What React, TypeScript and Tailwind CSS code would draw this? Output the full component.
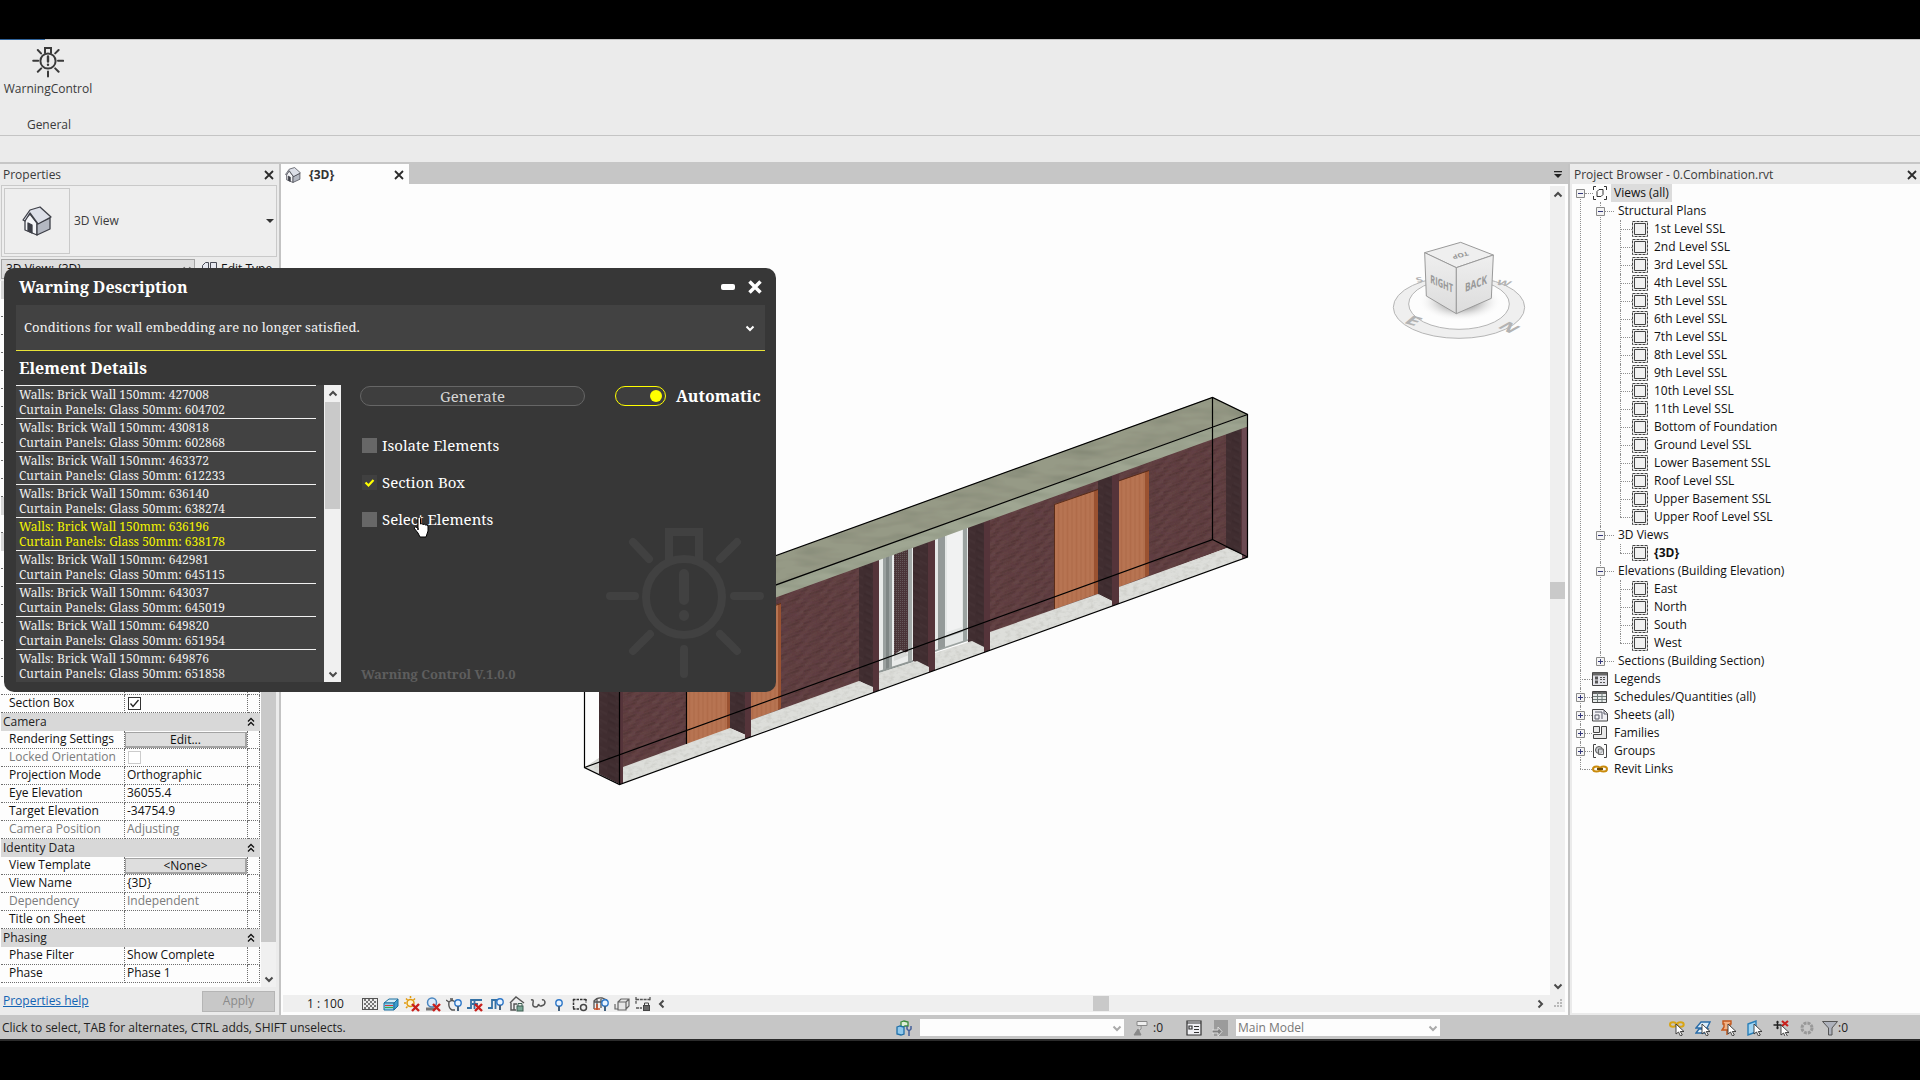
import React, { useState } from "react";

const SANS = "font-['Open_Sans','Noto_Sans',sans-serif]";
const SERIF = "font-['Noto_Serif','DejaVu_Serif_Condensed','DejaVu_Serif',serif]";

/* ---------- shared drawings ---------- */

function BulbIcon({ className, stroke }: { className: string; stroke: number }) {
  return (
    <svg viewBox="602 524 160 158" className={className} fill="none" stroke="currentColor" strokeWidth={stroke} aria-hidden="true">
      <circle cx="682" cy="598" r="38" />
      <path d="M667 562V533h30v29" />
      <path strokeLinecap="round" d="M608 597h25M732 597h26M682 650v25M631 543l16 17M735 543l-17 17M631 652l17-17M735 652l-17-17" />
      <path strokeLinecap="round" strokeWidth={stroke + 2} d="M682 575v26M682 616v1" />
    </svg>
  );
}

function House({ className }: { className: string }) {
  return (
    <svg viewBox="0 0 30 30" className={className} stroke="#3d3f47" strokeWidth="1.3" strokeLinejoin="round" aria-hidden="true">
      <path d="M3 13v11l12 5V17L8 8z" fill="#f4f5f8" />
      <path d="M15 18v11l13-6V12z" fill="#b4b8c2" />
      <path d="M1 14 8 4 18 1 29 11 16 18 8 7 3 15z" fill="#dcdfe8" />
      <path d="M6 17l4 2v8l-4-2z" fill="#3d3f47" />
    </svg>
  );
}

function Cross({ className }: { className: string }) {
  return (
    <svg viewBox="0 0 10 10" className={className} fill="none" stroke="#2b2b2b" strokeWidth="1.8" aria-hidden="true">
      <path d="M1 1l8 8M9 1 1 9" />
    </svg>
  );
}

function Chevron({ dir, color = "#4a4a4a" }: { dir: "up" | "down" | "left" | "right"; color?: string }) {
  const d = { up: "M1.5 6.500 5 3l3.500 3.500", down: "M1.500 3.500 5 7l3.500-3.500", left: "M6.500 1.500 3 5l3.500 3.500", right: "M3.500 1.500 7 5 3.500 8.500" }[dir];
  return (
    <svg viewBox="0 0 10 10" className="size-[10px] shrink-0" fill="none" stroke={color} strokeWidth="2" aria-hidden="true">
      <path d={d} />
    </svg>
  );
}

/* ---------- ribbon ---------- */

function Ribbon() {
  return (
    <header className="bg-[#ebebeb]">
      <div className="flex h-px bg-[#c4c4c4]">
        <span className="w-[45px] bg-[#2f6299]" />
      </div>
      <div className="flex h-[95px] flex-col items-start justify-between pl-[3px]">
        <button type="button" className="flex w-[90px] flex-col items-center gap-[3px] pt-[6px] text-[#3a3a3a]">
          <BulbIcon className="size-8" stroke={10} />
          <span className="text-xs leading-4">WarningControl</span>
        </button>
        <span className="w-[92px] pb-[2px] text-center text-xs leading-4 text-[#3a3a3a]">General</span>
      </div>
      <div className="h-[27px] border-t border-[#c4c4c4]" />
      <div className="h-[2px] bg-[#c6c6c6]" />
    </header>
  );
}

/* ---------- properties panel ---------- */

type Row =
  | { kind: "head"; label: string }
  | { kind: "text"; label: string; value?: string; dim?: boolean }
  | { kind: "button"; label: string; value: string }
  | { kind: "check"; label: string; checked: boolean; dim?: boolean };

const blank = (n: number): Row[] => Array.from({ length: n }, () => ({ kind: "text", label: "" }) as Row);

const ROWS: Row[] = [
  { kind: "head", label: "" },
  ...blank(11),
  { kind: "head", label: "" },
  ...blank(1),
  { kind: "head", label: "" },
  ...blank(8),
  { kind: "check", label: "Section Box", checked: true },
  { kind: "head", label: "Camera" },
  { kind: "button", label: "Rendering Settings", value: "Edit..." },
  { kind: "check", label: "Locked Orientation", checked: false, dim: true },
  { kind: "text", label: "Projection Mode", value: "Orthographic" },
  { kind: "text", label: "Eye Elevation", value: "36055.4" },
  { kind: "text", label: "Target Elevation", value: "-34754.9" },
  { kind: "text", label: "Camera Position", value: "Adjusting", dim: true },
  { kind: "head", label: "Identity Data" },
  { kind: "button", label: "View Template", value: "<None>" },
  { kind: "text", label: "View Name", value: "{3D}" },
  { kind: "text", label: "Dependency", value: "Independent", dim: true },
  { kind: "text", label: "Title on Sheet", value: "" },
  { kind: "head", label: "Phasing" },
  { kind: "text", label: "Phase Filter", value: "Show Complete" },
  { kind: "text", label: "Phase", value: "Phase 1" },
];

function PropertyRow({ row }: { row: Row }) {
  if (row.kind === "head") {
    return (
      <tr className="h-[18px] bg-[#d8d8d8]">
        <th colSpan={3} scope="colgroup" className="p-0 text-left font-normal">
          <span className="flex h-[18px] items-center justify-between pr-1 pl-[2px]">
            {row.label}
            {row.label && (
              <svg viewBox="0 0 8 10" className="mr-[1px] h-[10px] w-2" fill="none" stroke="#111" strokeWidth="1.3" aria-hidden="true">
                <path d="M1 4.500 4 1.500l3 3M1 8.500l3-3 3 3" />
              </svg>
            )}
          </span>
        </th>
      </tr>
    );
  }
  const dim = "dim" in row && row.dim;
  const cell = "h-[18px] border-r border-b border-dotted border-[#6e6e6e] p-0";
  return (
    <tr className={dim ? "text-[#7b7b7b]" : "text-[#111]"}>
      <th scope="row" className={cell + " text-left font-normal"}>
        <span className="block h-[17px] pl-2 leading-4">{row.label}</span>
      </th>
      <td className={cell}>
        {row.kind === "button" && (
          <button type="button" aria-label={row.label} className="block h-4 w-full border border-r-2 border-b-2 border-[#a3a3a3] bg-[#dedede] leading-[13px]">
            {row.value}
          </button>
        )}
        {row.kind === "check" && (
          <div className="flex h-[17px] items-center pl-[3px]">
            <input type="checkbox" aria-label={row.label} defaultChecked={row.checked} disabled={dim} className={"size-[13px] appearance-none border bg-white " + (dim ? "border-[#cccccc]" : "border-[#333]")} />
            {row.checked && (
              <svg viewBox="0 0 13 13" className="pointer-events-none -ml-[13px] size-[13px]" fill="none" stroke="#222" strokeWidth="1.300" aria-hidden="true">
                <path d="M2.500 6.500 5 9.500l5.500-6.500" />
              </svg>
            )}
          </div>
        )}
        {row.kind === "text" && <span className="block h-[17px] pl-[2px] leading-4">{row.value}</span>}
      </td>
      <td className={cell} />
    </tr>
  );
}

function PropertiesPanel() {
  return (
    <aside className="flex w-[281px] shrink-0 flex-col border-r-2 border-[#c3c3c3] bg-[#ebebeb] text-xs text-[#222]">
      <div className="flex h-[21px] items-center justify-between pr-[5px] pl-[3px] text-[#3a3a3a]">
        <h2>Properties</h2>
        <button type="button" aria-label="Close properties"><Cross className="size-[10px]" /></button>
      </div>
      <button type="button" className="mr-[2px] ml-px flex h-[72px] items-center border border-[#c9c9c9] bg-[#eeeeee] px-[2px] text-left text-[#3a3a3a]">
        <span className="flex size-[66px] items-center justify-center border border-[#c9c9c9]">
          <House className="size-[30px]" />
        </span>
        <span className="flex-1 pl-1">3D View</span>
        <svg viewBox="0 0 8 4" className="h-1 w-2" aria-hidden="true"><path d="M0 0h8L4 4z" fill="#333" /></svg>
      </button>
      <div className="flex h-6 items-center">
        <select aria-label="View type" className="ml-px h-5 w-[194px] appearance-none border border-[#a5a5a5] bg-[#dddddd] pl-1 text-[#111]">
          <option>3D View: {"{3D}"}</option>
        </select>
        <span className="-ml-[13px] w-[13px]"><Chevron dir="down" color="#666" /></span>
        <button type="button" className="flex items-center gap-1 pl-[6px] whitespace-nowrap text-[#111]">
          <svg viewBox="0 0 16 16" className="size-4" fill="#e6e8ef" stroke="#4a4d57" aria-hidden="true">
            <path d="M1.500 4.500l3-3h3v8h-6zM9.500 1.500h6v8h-6zM6.500 9.500h6v5h-6z" />
          </svg>
          Edit Type
        </button>
      </div>
      <div className="flex flex-1 bg-[#fdfdfd] pl-px">
        <div className="w-[259px]">
          <table className="w-full table-fixed border-separate border-spacing-0">
            <colgroup>
              <col className="w-[124px]" />
              <col />
              <col className="w-3" />
            </colgroup>
            <tbody>
              {ROWS.map((row, i) => <PropertyRow key={i} row={row} />)}
            </tbody>
          </table>
        </div>
        <div className="ml-px flex w-[15px] flex-col items-center bg-[#f0f0f0]">
          <div className="w-full flex-1 bg-[#c9c9c9]" />
          <div className="flex h-[45px] items-end pb-[3px]"><Chevron dir="down" /></div>
        </div>
        <div className="flex-1 bg-[#ebebeb]" />
      </div>
      <div className="flex h-7 items-center justify-between pr-1 pl-[3px]">
        <a href="#help" className="text-[#1464b4] underline">Properties help</a>
        <button type="button" disabled className="h-[21px] w-[73px] border border-[#b5b5b5] bg-[#c8c8c8] text-[#8a8a8a]">Apply</button>
      </div>
    </aside>
  );
}

/* ---------- 3D model ---------- */

const beam = (x: number) => 594 - (x - 776) * 0.363;
const front = (x: number) => 784.3 - (x - 619.7) * 0.362;

function strip(x1: number, y1: number, x2: number, y2: number) {
  return `${x1},${beam(x1)} ${x2},${beam(x2)} ${x2},${y2} ${x1},${y1}`;
}

/* [left x, left bottom, right x, right bottom] */
const WALLS: number[][] = [
  [623, 768, 687, 745],
  [727, 730, 751, 722],
  [751, 721, 860, 682],
  [990, 633, 1099, 595],
  [1119, 588, 1227, 548],
];
const SIDES: number[][] = [
  [599, 774, 620, 784.3],
  [730, 728, 746, 735],
  [859, 681, 873, 688],
  [913, 661, 929, 668],
  [968, 642, 984, 648],
  [1098, 594, 1112, 601],
  [1226, 548, 1241, 555],
];
const PIERS: number[][] = [
  [620, 623], [745, 751], [873, 879], [928, 935], [984, 990], [1112, 1119], [1241, 1247],
];
const DOORS = [
  "687,600 727,600 727,730 687,745",
  "751,614 778,604 778,710 751,720",
  "1055,504 1094,491 1094,595 1055,609",
  "1119,481 1145,472 1145,577 1119,587",
];
const DOOR_EDGES = [
  "727,600 730,600 730,728 727,730",
  "778,604 781,603 781,708 778,710",
  "1094,491 1098,489.500 1098,594 1094,595",
  "1145,472 1149,470.500 1149,575 1145,577",
];
const SILLS = [
  "585,767 599,758 599,774",
  "623,767 730,728 745,735 745,739 623,783",
  "751,720 859,681 873,687 873,692 751,736",
  "879,673 917,661 929,667 929,672 879,690",
  "935,653 972,641 984,647 984,652 935,670",
  "990,632 1098,594 1112,601 1112,606 990,650",
  "1119,587 1227,548 1242,554 1242,559 1119,603",
];

function Building() {
  return (
    <svg viewBox="580 390 680 400" className="absolute top-[206px] left-[299px] h-[400px] w-[680px]" aria-label="Section of a brick wall with doors and curtain panels" role="img">
      <defs>
        <pattern id="brick" width="24" height="12" patternUnits="userSpaceOnUse" patternTransform="skewY(-20)">
          <rect width="24" height="12" fill="#5c3c3d" />
          <rect width="7" height="2.600" fill="#553738" />
          <rect x="8" width="8" height="2.600" fill="#634243" />
          <rect x="17" width="7" height="2.600" fill="#593a3b" />
          <rect x="4" y="3" width="7" height="2.600" fill="#654445" />
          <rect x="12" y="3" width="7" height="2.600" fill="#553638" />
          <rect y="6" width="8" height="2.600" fill="#5f3e3f" />
          <rect x="9" y="6" width="6" height="2.600" fill="#573839" />
          <rect x="16" y="6" width="8" height="2.600" fill="#624242" />
          <rect x="3" y="9" width="8" height="2.600" fill="#553637" />
          <rect x="13" y="9" width="7" height="2.600" fill="#644344" />
          <path d="M0 2.800h24M0 5.800h24M0 8.800h24M0 11.800h24" stroke="#6b4c4d" strokeWidth=".3" />
        </pattern>
        <pattern id="brickSide" width="16" height="9" patternUnits="userSpaceOnUse" patternTransform="skewY(26)">
          <rect width="16" height="9" fill="#402d30" />
          <rect width="7" height="2.500" fill="#3c2a2d" />
          <rect x="8" y="3" width="7" height="2.500" fill="#443134" />
          <rect x="2" y="6" width="8" height="2.500" fill="#423033" />
        </pattern>
        <pattern id="wood" width="9" height="60" patternUnits="userSpaceOnUse">
          <rect width="9" height="60" fill="#b5714f" />
          <path d="M1 0v60M5.500 0v60" stroke="#b06c4a" />
          <path d="M3 0v60M8 0v60" stroke="#ba7755" />
        </pattern>
        <pattern id="mesh" width="2" height="2" patternUnits="userSpaceOnUse">
          <rect width="2" height="2" fill="#4a3437" />
          <rect width="1" height="1" fill="#65585a" />
        </pattern>
        <filter id="clay" x="0" y="0" width="100%" height="100%">
          <feTurbulence type="fractalNoise" baseFrequency=".09 .22" numOctaves="3" seed="3" />
          <feColorMatrix values="0 0 0 0 .12  0 0 0 0 .05  0 0 0 0 .06  0 0 0 1.6 -.6" />
          <feComposite in2="SourceGraphic" operator="in" result="n" />
          <feMerge><feMergeNode in="SourceGraphic" /><feMergeNode in="n" /></feMerge>
        </filter>
        <filter id="stone" x="0" y="0" width="100%" height="100%">
          <feTurbulence type="fractalNoise" baseFrequency=".18 .3" numOctaves="3" seed="4" />
          <feColorMatrix values="0 0 0 0 .5  0 0 0 0 .5  0 0 0 0 .46  0 0 0 1.2 -.52" />
          <feComposite in2="SourceGraphic" operator="in" result="n" />
          <feMerge><feMergeNode in="SourceGraphic" /><feMergeNode in="n" /></feMerge>
        </filter>
        <filter id="grain" x="0" y="0" width="100%" height="100%">
          <feTurbulence type="fractalNoise" baseFrequency=".03 .12" numOctaves="2" seed="8" />
          <feColorMatrix values="0 0 0 0 .1  0 0 0 0 .12  0 0 0 0 .08  0 0 0 .6 -.24" />
          <feComposite in2="SourceGraphic" operator="in" result="n" />
          <feMerge><feMergeNode in="SourceGraphic" /><feMergeNode in="n" /></feMerge>
        </filter>
      </defs>

      <g fill="url(#brick)" filter="url(#clay)">
        {WALLS.map(([a, b, c, d]) => <polygon key={a} points={strip(a, b, c, d)} />)}
      </g>

      <g>
        <polygon points={strip(879, 675, 913, 662)} fill="#e9ebea" />
        <polygon points={strip(883, 670, 892, 667)} fill="#9aa09f" />
        <polygon points={strip(886, 670, 889, 669)} fill="#7f8685" />
        <polygon points={strip(894, 657, 909, 651)} fill="url(#mesh)" />
        <polygon points="894,655 901,650 909,655 894,661" fill="#d9dbd9" />
        <polygon points={strip(908, 662, 912, 660)} fill="#a3a9a7" />
        <path d="M879 672l34-11" stroke="#8f9694" strokeWidth="2" />
        <polygon points={strip(935, 652, 968, 641)} fill="#e4e7e6" />
        <polygon points={strip(938, 650, 945, 648)} fill="#949a99" />
        <polygon points={strip(947, 632, 962, 627)} fill="#f1f2f2" />
        <polygon points={strip(963, 642, 967, 640)} fill="#9ca3a1" />
        <path d="M935 651l33-11M945 637l20-7" stroke="#9aa19f" strokeWidth="1.500" />
      </g>

      <g fill="url(#brickSide)">
        {SIDES.map(([a, b, c, d]) => <polygon key={a} points={strip(a, b, c, d)} />)}
      </g>
      <g fill="#55343a">
        {PIERS.map(([a, b]) => <polygon key={a} points={strip(a, front(a), b, front(b))} />)}
      </g>
      <polygon points="1242,428 1247,426 1247,557 1242,559" fill="#6b4a52" />

      <g fill="url(#wood)">{DOORS.map((p) => <polygon key={p} points={p} />)}</g>
      <g fill="#9a5231">{DOOR_EDGES.map((p) => <polygon key={p} points={p} />)}</g>
      <path d="M1054.500 609V504.500L1098 489.500M1118.500 481 1149 470.500M751 613.500l30-10" fill="none" stroke="#5a2c18" />

      <g fill="#dddeda" filter="url(#stone)">{SILLS.map((p) => <polygon key={p} points={p} />)}</g>

      <g filter="url(#grain)">
        <polygon points="584.700,625 1212.300,397.300 1247.700,414.300 619.700,641.600" fill="#969a86" />
        <polygon points="619.700,641.600 1247.700,414.300 1247.700,426.500 619.700,654" fill="#9fa692" />
      </g>

      <g fill="none" stroke="#000" strokeWidth="1.200">
        <path d="M584.500 625 1212.500 397.500 1247.500 414.500V557L619.500 784.500 584.500 767.500z" />
        <path d="M584.500 625 619.500 641.500 1247.500 414.500M619.500 641.500V784.500M584.500 767.500 1212.500 539.500V397.500M1212.500 539.500l35 17.500M686.500 600V744" />
      </g>
    </svg>
  );
}

function ViewCube() {
  return (
    <svg viewBox="0 0 480 390" className="absolute top-9 right-[10px] h-[130px] w-40" role="img" aria-label="View cube">
      <defs>
        <radialGradient id="cubeShadow">
          <stop offset=".3" stopColor="#9a9a9a" />
          <stop offset="1" stopColor="#fdfdfd" stopOpacity="0" />
        </radialGradient>
        <linearGradient id="cubeFace" x2="0" y2="1">
          <stop stopColor="#efefef" />
          <stop offset="1" stopColor="#dcdcdc" />
        </linearGradient>
      </defs>
      <g fill="none" stroke="#b5b5b5" strokeWidth="3">
        <ellipse cx="237" cy="262" rx="197" ry="93" fill="#efefef" />
        <ellipse cx="237" cy="252" rx="151" ry="76" fill="#fdfdfd" />
      </g>
      <ellipse cx="240" cy="245" rx="125" ry="58" fill="url(#cubeShadow)" />
      <g fill="#b3b3b3" fontFamily="Open Sans" fontWeight="700" fontSize="52">
        <text transform="matrix(1.300 .35 -.7 .6 68 308)">E</text>
        <text transform="matrix(1 .45 -.9 .5 350 322)">N</text>
        <text transform="matrix(.7 -.1 .2 .4 112 188)">S</text>
        <text transform="matrix(.8 .1 -.3 .4 346 194)">W</text>
      </g>
      <g stroke="#9a9a9a" strokeWidth="3" strokeLinejoin="round">
        <path d="M134 98 242 67l98 38-111 38z" fill="#efefef" />
        <path d="M134 98l95 45v138l-90-53z" fill="url(#cubeFace)" />
        <path d="M229 143l111-38-6 130-105 46z" fill="url(#cubeFace)" />
      </g>
      <g fill="#989898" fontFamily="Open Sans" fontWeight="700" fontSize="32">
        <text transform="matrix(.7 .32 0 1.100 151 188)">RIGHT</text>
        <text transform="matrix(.78 -.3 0 1.100 255 216)">BACK</text>
        <text transform="matrix(-.85 .2 -.3 -.6 262 94)" fontSize="28">TOP</text>
      </g>
    </svg>
  );
}

/* ---------- view control bar ---------- */

const Bulb = () => (
  <>
    <circle cx="11" cy="7" r="3.200" fill="#e8f3ff" stroke="#2f78c8" strokeWidth="1.400" />
    <path d="M11 10v5" stroke="#44607c" strokeWidth="2" />
  </>
);
const RedX = () => <path d="M8 8l7 7M15 8l-7 7" stroke="#c8201c" strokeWidth="2.400" />;

const VIEW_ICONS: [string, React.ReactNode][] = [
  ["Detail level", <><rect x=".5" y="2.500" width="15" height="11" fill="#eee" stroke="#555" /><path d="M2 4h12M2 8h12M2 12h12" stroke="#777" strokeWidth="2" strokeDasharray="2 2" /><path d="M4 6h10M4 10h10" stroke="#777" strokeWidth="2" strokeDasharray="2 2" /></>],
  ["Visual style", <><path d="M1 7l5-4h9l-4 4z" fill="#d4ecf8" stroke="#1b6f9e" /><path d="M1 7h10v7H1z" fill="#8fd0ea" stroke="#1b6f9e" /><path d="M11 7l4-4v7l-4 4z" fill="#3f9bcc" stroke="#1b6f9e" /><path d="M2 9.500h8" stroke="#d03a3a" /><path d="M2 11.500h8" stroke="#3aa845" /></>],
  ["Sun path", <><circle cx="6.500" cy="7" r="3.500" fill="#fff6d0" stroke="#e09a10" strokeWidth="1.500" /><path d="M6.500 0v2M0 7h2M2 2.500l1.500 1.500M2 12l1.500-1.500M11 2.500 9.500 4" stroke="#e09a10" strokeWidth="1.500" /><RedX /></>],
  ["Shadows", <><circle cx="7" cy="6.500" r="4.500" fill="#dcebfa" stroke="#4a86c0" strokeWidth="1.500" /><path d="M1 13h9" stroke="#777" strokeWidth="3" /><RedX /></>],
  ["Rendering", <><path d="M0 4l3 2q3-3 6 0M3 6q-1 6 3 8h3M4 3h3" fill="none" stroke="#555" strokeWidth="1.400" /><g transform="translate(1 0)"><Bulb /></g></>],
  ["Crop view", <><path d="M0 12h4V4h11M5 8h6M7.500 4v9" fill="none" stroke="#3471a5" strokeWidth="1.800" /><RedX /></>],
  ["Crop region", <><path d="M0 12h4V4h5M7.500 4v9" fill="none" stroke="#3471a5" strokeWidth="1.800" /><g transform="translate(1 -1)"><Bulb /></g></>],
  ["Lock view", <><path d="M1 7l6-6 8 6M2 7v7h5M5 14V8h3" fill="none" stroke="#555" strokeWidth="1.400" /><rect x="8" y="10" width="6" height="5" fill="#79a694" stroke="#3c5d50" /><path d="M9 10V7.500h4V10" fill="none" stroke="#3c5d50" /></>],
  ["Isolate", <><path d="M1 4q3-1 2 3-1 4 3 4 2 0 2.500-3 1 3 4 1.500Q15 9 15 6q-1-3-3-2" fill="none" stroke="#555" strokeWidth="1.500" /></>],
  ["Reveal hidden", <g transform="translate(-3 0)"><Bulb /></g>],
  ["View properties", <><path d="M1 3.500h13M1 13h6M1.500 3v10M14 3v4" fill="none" stroke="#333" strokeWidth="1.500" strokeDasharray="2.500 1" /><circle cx="11.500" cy="11.500" r="3" fill="#eee" stroke="#444" strokeWidth="1.500" /></>],
  ["Analytical model", <><path d="M1 13V5q3-4 8-3l5 2M1 6h9M4 3v11M8 3v9" fill="none" stroke="#555" strokeWidth="1.300" /><path d="M4 8v6M1 13h6" stroke="#c9502a" strokeWidth="1.500" /><g transform="translate(1 0)"><Bulb /></g></>],
  ["Displacement", <><path d="M4 6l3-3h8v7l-3 3M4 6h8v8H4zM12 6l3-3M1 8v5h3" fill="#e6e6e6" stroke="#666" strokeWidth="1.200" /></>],
  ["Constraints", <><path d="M1 1v7M15 1v4M1 3.500h14M1 12h6" fill="none" stroke="#555" strokeWidth="1.300" strokeDasharray="3 .8" /><rect x="8.500" y="9.500" width="6" height="5" fill="#666" stroke="#444" /><path d="M9.500 9V7h4v2" fill="none" stroke="#444" /></>],
];

function DrawingArea() {
  return (
    <main className="flex min-w-0 flex-1 flex-col bg-[#fdfdfd]">
      <div className="flex h-5 items-stretch justify-between bg-[#c6c6c6]">
        <div className="flex w-32 items-center bg-[#fdfdfd] pt-px pr-[5px] pl-1">
          <House className="size-4" />
          <span className="flex-1 pl-2 text-xs font-bold text-[#333]">{"{3D}"}</span>
          <button type="button" aria-label="Close view"><Cross className="size-[10px]" /></button>
        </div>
        <button type="button" aria-label="Open views" className="pt-px pr-[6px]">
          <svg viewBox="0 0 8 7" className="h-[7px] w-2" aria-hidden="true"><path d="M0 0h8v1.200H0zM0 3h8L4 7z" fill="#222" /></svg>
        </button>
      </div>
      <div className="flex flex-1">
        <div className="relative flex-1 overflow-hidden">
          <Building />
          <ViewCube />
        </div>
        <div className="mt-[2px] mr-[3px] flex w-[15px] flex-col items-center justify-between bg-[#efefef] py-1">
          <Chevron dir="up" />
          <div className="h-[17px] w-full bg-[#c9c9c9]" />
          <Chevron dir="down" />
        </div>
      </div>
      <div className="mr-[3px] mb-[3px] ml-[2px] flex h-[17px] items-center bg-[#efefef]">
        <span className="w-[79px] pl-6 text-xs leading-4 text-[#222]">1 : 100</span>
        <div className="flex gap-[5px]">
          {VIEW_ICONS.map(([name, art]) => (
            <button key={name} type="button" aria-label={name}>
              <svg viewBox="0 0 16 16" className="size-4" aria-hidden="true">{art}</svg>
            </button>
          ))}
        </div>
        <div className="flex flex-1 items-center justify-between pr-[9px] pl-[6px]">
          <Chevron dir="left" />
          <div className="h-[15px] w-4 bg-[#c9c9c9]" />
          <Chevron dir="right" />
        </div>
        <svg viewBox="0 0 9 9" className="mr-[2px] size-[9px]" fill="#b9b9b9" aria-hidden="true">
          <path d="M6 0h2v2H6zM6 3h2v2H6zM3 3h2v2H3zM6 6h2v2H6zM3 6h2v2H3zM0 6h2v2H0z" />
        </svg>
      </div>
    </main>
  );
}

/* ---------- project browser ---------- */

const SheetIcon = () => (
  <svg viewBox="0 0 16 16" className="size-4" fill="#f1f1f1" stroke="#444" aria-hidden="true">
    <path d="M.5.500h15v15H.5z" strokeDasharray="3 1" />
    <path d="M2.500 2.500h11v11h-11z" />
  </svg>
);

const PLANS = [
  "1st Level SSL", "2nd Level SSL", "3rd Level SSL", "4th Level SSL", "5th Level SSL", "6th Level SSL",
  "7th Level SSL", "8th Level SSL", "9th Level SSL", "10th Level SSL", "11th Level SSL",
  "Bottom of Foundation", "Ground Level SSL", "Lower Basement SSL", "Roof Level SSL",
  "Upper Basement SSL", "Upper Roof Level SSL",
];

function Expander({ open, name }: { open: boolean; name: string }) {
  return (
    <button type="button" aria-expanded={open} aria-label={name} className="relative z-10 size-[9px] shrink-0">
      <svg viewBox="0 0 9 9" className="size-[9px]" fill="#f4f4f4" stroke="#8a8a8a" aria-hidden="true">
        <path d="M.5.500h8v8h-8z" />
        <path d={open ? "M2 4.500h5" : "M2 4.500h5M4.500 2v5"} stroke="#33377a" />
      </svg>
    </button>
  );
}

const Dots = ({ className }: { className: string }) => <span className={"h-0 shrink-0 border-t border-dotted border-[#8f8f8f] " + className} />;

function Branch({ label, open, items = [], last }: { label: string; open: boolean; items?: string[]; last?: boolean }) {
  return (
    <li className="relative">
      <span className={"absolute top-0 left-1 border-l border-dotted border-[#8f8f8f] " + (last ? "h-2" : "h-full")} />
      <div className="flex h-[18px] items-center">
        <Expander open={open} name={label} />
        <Dots className="w-[9px]" />
        <span className="pl-1">{label}</span>
      </div>
      {items.length > 0 && (
        <ul className="pl-6">
          {items.map((item, i) => (
            <li key={item} className="relative flex h-[18px] items-center">
              <span className={"absolute top-0 left-0 border-l border-dotted border-[#8f8f8f] " + (i === items.length - 1 ? "h-[9px]" : "h-full")} />
              <Dots className="w-3" />
              <SheetIcon />
              <span className={"pl-[6px] " + (item === "{3D}" ? "font-bold" : "")}>{item}</span>
            </li>
          ))}
        </ul>
      )}
    </li>
  );
}

const ROOTS: [string, boolean, React.ReactNode][] = [
  ["Legends", false, <><path d="M.5 1.500h15v13H.5z" fill="#e4e4ea" stroke="#444" /><path d="M1 3h14" stroke="#666" strokeWidth="3" /><path d="M3 7h3M3 11h3" stroke="#555" strokeWidth="3" /><path d="M8 6.500h5M8 8.500h5M8 11.500h5" stroke="#555" strokeDasharray="2 1" /></>],
  ["Schedules/Quantities (all)", true, <><path d="M.5 2.500h14v11H.5z" fill="#e8eceb" stroke="#444" /><path d="M1 4h13" stroke="#666" strokeWidth="2" /><path d="M1 7.500h13M1 10.500h13M5.500 3v10M10 3v10" stroke="#6f7a78" /></>],
  ["Sheets (all)", true, <><path d="M.5 2.500h11l4 4v7.500H.5z" fill="#f0f0f4" stroke="#444" /><path d="M3 5h7v7M3 8h4v4H3zM12 3v4h3" fill="none" stroke="#5a5c6a" /></>],
  ["Families", true, <path d="M1.500 1.500h6v6h-6zM9.500 1.500h5v12h-13v-4h8z" fill="#e9e9e9" stroke="#444" />],
  ["Groups", true, <><path d="M4 1.500H1.500v13H4M12 1.500h2.500v13H12" fill="none" stroke="#444" /><circle cx="7" cy="7" r="3.500" fill="#c9ccd0" stroke="#555" /><path d="M6.500 6h5v5.500h-5z" fill="#dfe1e5" fillOpacity=".6" stroke="#666" /></>],
  ["Revit Links", false, <g fill="none" stroke="#c98a0c" strokeWidth="2"><ellipse cx="4.500" cy="8" rx="3.500" ry="2.500" /><ellipse cx="11.500" cy="8" rx="3.500" ry="2.500" /><path d="M5 8h6" stroke="#6b4a08" /></g>],
];

function ProjectBrowser() {
  return (
    <aside className="flex w-[352px] shrink-0 flex-col border-l-2 border-[#c3c3c3] bg-[#ebebeb] text-xs text-[#111]">
      <div className="flex h-5 items-center justify-between pt-[2px] pr-[3px] pl-1 text-[#3a3a3a]">
        <h2>Project Browser - 0.Combination.rvt</h2>
        <button type="button" aria-label="Close project browser"><Cross className="size-[10px]" /></button>
      </div>
      <div className="mb-[2px] ml-[2px] flex-1 bg-[#fdfdfd] pl-1">
        <ul>
          <li className="relative">
            <span className="absolute top-2 left-1 h-full border-l border-dotted border-[#8f8f8f]" />
            <div className="flex h-[18px] items-center">
              <Expander open name="Views (all)" />
              <Dots className="w-2" />
              <svg viewBox="0 0 14 14" className="size-[14px]" fill="none" stroke="#333" aria-hidden="true">
                <path d="M3 .5H.5V4M11 .5h2.500V4M3 13.500H.5V10M11 13.500h2.500V10M4 5.500 6 3.500h4v5l-2 2H4z" />
              </svg>
              <span className="ml-1 h-[18px] bg-[#dcdcdc] px-[3px] leading-[18px]">Views (all)</span>
            </div>
            <ul className="pl-5">
              <Branch label="Structural Plans" open items={PLANS} />
              <Branch label="3D Views" open items={["{3D}"]} />
              <Branch label="Elevations (Building Elevation)" open items={["East", "North", "South", "West"]} />
              <Branch label="Sections (Building Section)" open={false} last />
            </ul>
          </li>
          {ROOTS.map(([label, expandable, art], i) => (
            <li key={label} className="relative flex h-[18px] items-center">
              <span className={"absolute top-0 left-1 border-l border-dotted border-[#8f8f8f] " + (i === ROOTS.length - 1 ? "h-[9px]" : "h-full")} />
              {expandable ? <Expander open={false} name={label} /> : <Dots className="ml-1 w-[5px]" />}
              <Dots className="w-[7px]" />
              <svg viewBox="0 0 16 16" className="size-4" aria-hidden="true">{art}</svg>
              <span className="pl-[6px]">{label}</span>
            </li>
          ))}
        </ul>
      </div>
    </aside>
  );
}

/* ---------- status bar ---------- */

const Pointer = () => <path d="M7 4v10l2.500-2 2 4 1.800-1-2-3.500H15z" fill="#fff" stroke="#333" strokeWidth=".9" />;

const SELECT_ICONS: [string, React.ReactNode][] = [
  ["Select links", <><g fill="none" stroke="#d9a514" strokeWidth="2"><ellipse cx="4" cy="4.500" rx="3" ry="2.300" /><ellipse cx="11.500" cy="4.500" rx="3.200" ry="2.300" /></g><Pointer /></>],
  ["Select underlay", <><path d="M1 8l5-6h9l-3 6zM1 13l3-4h9l-3 4z" fill="#dceefa" stroke="#2a6ca8" strokeWidth="1.400" /><Pointer /></>],
  ["Select pinned", <><path d="M2 1h8v3H9v3l2 3H1l2-3V4H2zM6 10v5" fill="#f2b184" stroke="#c4571c" strokeWidth="1.400" /><Pointer /></>],
  ["Select by face", <><path d="M1 4l8-3v11l-8 3z" fill="#9fd4f2" stroke="#2a7fb8" strokeWidth="1.400" /><Pointer /></>],
  ["Drag on selection", <><path d="M4.500 1v8M.5 5h8" stroke="#222" strokeWidth="1.500" /><path d="M3 2.500 4.500.5 6 2.500zM3 7.500l1.500 2 1.500-2z" fill="#222" /><path d="M9 1l6 5M15 1 9 6" stroke="#c8201c" strokeWidth="2.200" /><g transform="translate(1 1)"><Pointer /></g></>],
  ["Background processes", <circle cx="8" cy="8" r="5" fill="none" stroke="#989898" strokeWidth="3" strokeDasharray="2.900 1" />],
];

const field = "h-[17px] w-[204px] appearance-none bg-[#fdfdfd] pl-[2px] text-xs leading-4 text-[#777]";

function StatusBar() {
  return (
    <footer className="flex h-6 items-center bg-[#c6c6c6] pt-px text-xs text-[#222]">
      <p className="w-[896px] pl-[2px]">Click to select, TAB for alternates, CTRL adds, SHIFT unselects.</p>
      <svg viewBox="0 0 16 16" className="size-4" fill="#8fc8ec" stroke="#1f6fa8" strokeWidth="1.300" aria-hidden="true">
        <path d="M5 2l3-1 4 1v4H9L5 8z" fill="#dff0d8" stroke="#3a8a3a" />
        <path d="M1 7l3-1 4 1v7l-3 1-4-1z" />
        <path d="M11 6v3l2 2 2-2V6M13 11v5" fill="none" stroke="#44609a" strokeWidth="1.500" />
      </svg>
      <div className="flex items-center pl-2">
        <select aria-label="Active workset" className={field}><option></option></select>
        <span className="-ml-3 w-3"><Chevron dir="down" color="#aaa" /></span>
      </div>
      <svg viewBox="0 0 16 16" className="ml-2 size-4" fill="#eee" stroke="#888" aria-hidden="true">
        <path d="M5 1.500h10v4H5zM9 6v3l-3 2" />
        <path d="M2 15l4-6 3 6z" fill="#888" />
      </svg>
      <span className="pl-[5px]">:0</span>
      <svg viewBox="0 0 16 16" className="ml-[23px] size-4" fill="#f0f0f4" stroke="#333" strokeWidth="1.200" aria-hidden="true">
        <path d="M1 1h14v14H1zM1 3h14M3 6h3v3H3z" />
        <path d="M8 6.500h5M8 9.500h5M8 12.500h5" />
      </svg>
      <svg viewBox="0 0 16 16" className="ml-[10px] size-4" aria-hidden="true">
        <path d="M2 0h14v16H2z" fill="#9b9b9b" />
        <path d="M0 10h6V7l4 4.500L6 16v-3H0z" fill="#808080" stroke="#ddd" />
      </svg>
      <div className="flex items-center pl-2">
        <select aria-label="Design option" className={field}><option>Main Model</option></select>
        <span className="-ml-3 w-3"><Chevron dir="down" color="#aaa" /></span>
      </div>
      <div className="ml-auto flex items-center pr-[72px]">
        <div className="flex items-center gap-[10px] pr-[7px]">
          {SELECT_ICONS.map(([name, art]) => (
            <button key={name} type="button" aria-label={name}><svg viewBox="0 0 16 16" className="size-4" aria-hidden="true">{art}</svg></button>
          ))}
        </div>
        <button type="button" className="flex items-center">
          <svg viewBox="0 0 16 16" className="size-4" fill="#aeb2bc" stroke="#555" aria-hidden="true"><path d="M.5 1.500h15L10 8v7H6.500V8z" /></svg>
          :0
        </button>
      </div>
    </footer>
  );
}

/* ---------- warning dialog ---------- */

const ELEMENTS: [string, string][] = [
  ["427008", "604702"], ["430818", "602868"], ["463372", "612233"], ["636140", "638274"], ["636196", "638178"],
  ["642981", "645115"], ["643037", "645019"], ["649820", "651954"], ["649876", "651858"],
];

function Option({ label, initial }: { label: string; initial: boolean }) {
  const [on, setOn] = useState(initial);
  return (
    <label className="flex h-[18px] items-center gap-[5px]">
      <span className="relative size-[15px]">
        <input type="checkbox" checked={on} onChange={() => setOn(!on)} className="block size-[15px] appearance-none bg-[#676767] checked:bg-[#404040]" />
        {on && (
          <svg viewBox="0 0 15 15" className="pointer-events-none absolute inset-0" fill="none" stroke="#ffff00" strokeWidth="2.200" aria-hidden="true">
            <path d="M3.500 7.500l3 3 5-5.500" />
          </svg>
        )}
      </span>
      {label}
    </label>
  );
}

function WarningDialog() {
  const [selected, setSelected] = useState(4);
  return (
    <section role="dialog" aria-label="Warning Description" className={"absolute top-[268px] left-1 z-20 flex w-[772px] flex-col rounded-[10px] bg-[#373737] pr-[11px] pb-[10px] pl-3 text-white " + SERIF}>
      <div className="flex h-[37px] items-center justify-between pr-[3px] pl-[3px]">
        <h1 className="text-base font-bold">Warning Description</h1>
        <div className="flex items-center gap-[13px]">
          <button type="button" aria-label="Minimize" className="h-[6px] w-[14px] rounded-[2px] bg-white" />
          <button type="button" aria-label="Close">
            <svg viewBox="0 0 14 14" className="size-[14px]" fill="none" stroke="#fff" strokeWidth="3.500" aria-hidden="true"><path d="M1.500 1.500l11 11M12.500 1.500l-11 11" /></svg>
          </button>
        </div>
      </div>
      <div className="flex h-[46px] items-center border-b border-[#e8e337] bg-[#424242]">
        <select aria-label="Warning" className="h-full flex-1 appearance-none pl-2 text-[13px] text-[#f2f2f2]">
          <option>Conditions for wall embedding are no longer satisfied.</option>
        </select>
        <span className="-ml-5 pr-[10px]"><Chevron dir="down" color="#fff" /></span>
      </div>
      <h2 className="flex h-[34px] items-center pl-[3px] text-base font-bold">Element Details</h2>
      <div className="flex">
        <div className="flex h-[297px] w-[325px] bg-[#424242]">
          <ul className="w-[300px]">
            {ELEMENTS.map(([wall, panel], i) => (
              <li key={wall} className="h-[33px] border-t border-[#f0f0f0]">
                <button type="button" onClick={() => setSelected(i)} className={"block w-full pt-px pl-[3px] text-left text-xs leading-[15px] " + (i === selected ? "text-[#f4f400]" : "text-[#f0f0f0]")}>
                  Walls: Brick Wall 150mm: {wall}<br />
                  Curtain Panels: Glass 50mm: {panel}
                </button>
              </li>
            ))}
          </ul>
          <div className="ml-2 flex w-[17px] flex-col items-center bg-[#f0f0f0]">
            <span className="flex h-[17px] items-center"><Chevron dir="up" /></span>
            <div className="h-[107px] w-[15px] bg-[#c9c9c9]" />
            <span className="mt-auto flex h-[17px] items-center"><Chevron dir="down" /></span>
          </div>
        </div>
        <div className="relative flex flex-1 flex-col pl-[19px]">
          <div className="flex h-[21px] items-end">
            <button type="button" className="h-5 w-[225px] rounded-full border border-[#666] bg-[#3e3e3e] text-[15px] leading-4 text-[#d6d6d6]">Generate</button>
            <label className="ml-[30px] flex items-center gap-[10px] text-base leading-5 font-bold">
              <span className="relative h-5 w-[51px]">
                <input type="checkbox" role="switch" defaultChecked className="block h-5 w-[51px] appearance-none rounded-full border border-[#ffff00] bg-[#3e3e3e]" />
                <span className="pointer-events-none absolute top-1 right-1 size-3 rounded-full bg-[#ffff00]" />
              </span>
              Automatic
            </label>
          </div>
          <div className="mt-[30px] flex flex-col gap-[19px] pl-[2px] text-[15px]">
            <Option label="Isolate Elements" initial={false} />
            <Option label="Section Box" initial />
            <Option label="Select Elements" initial={false} />
          </div>
          <p className="mt-auto pl-px text-[13px] leading-4 font-bold text-[#5e5e5e]">Warning Control V.1.0.0</p>
          <BulbIcon className="absolute right-px bottom-0 size-40 text-[#414141]" stroke={8} />
          <svg viewBox="0 0 16 22" className="absolute top-[131px] left-[72px] h-[22px] w-4" fill="#fff" stroke="#000" aria-hidden="true">
            <path d="M5 14V2.500q0-1.500 1.300-1.500T7.500 2.500V8q1.500-1 2.500.5 1.500-.8 2.500.5 1.500-.5 2.500 1v5l-2 6H7l-2-4-4-5q1-2 4 0z" />
          </svg>
        </div>
      </div>
    </section>
  );
}

export default function App() {
  return (
    <div className={"relative flex min-h-screen flex-col bg-black " + SANS}>
      <div className="h-[39px]" />
      <Ribbon />
      <div className="flex flex-1">
        <PropertiesPanel />
        <DrawingArea />
        <ProjectBrowser />
      </div>
      <StatusBar />
      <div className="mb-[39px] h-[2px] bg-[#2b2b2b]" />
      <WarningDialog />
    </div>
  );
}
